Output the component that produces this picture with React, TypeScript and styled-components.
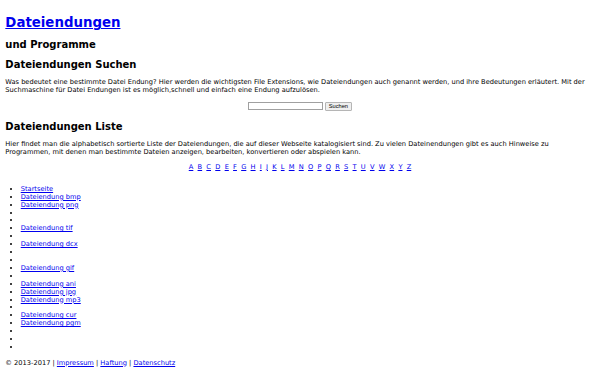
import React from "react";
import styled, { createGlobalStyle } from "styled-components";

const GlobalStyle = createGlobalStyle`
  html, body {
    margin: 0;
    padding: 0;
    background: #ffffff;
  }
  body {
    font-family: "DejaVu Sans", "Liberation Sans", sans-serif;
    font-size: 6.667px;
    color: #000000;
  }
`;

const Page = styled.div`
  display: flow-root;
  padding: 0 5.33px;
`;

const Link = styled.a`
  color: #0000ee;
  text-decoration: underline;
`;

const Title = styled.h1`
  font-size: 13.33px;
  font-weight: bold;
  margin: 15.3px 0 8.93px;
  line-height: normal;
`;

const SubHeading = styled.h2<{ $after?: number }>`
  font-size: 10px;
  font-weight: bold;
  margin: 8.3px 0 ${(p) => p.$after ?? 8.3}px;
  line-height: normal;
`;

const Text = styled.p`
  margin: 6.67px 0;
  line-height: normal;
`;

const SearchForm = styled.form`
  display: flex;
  justify-content: center;
  align-items: center;
  gap: 1.7px;
  height: 11.8px;
  margin: 6.67px 0;
`;

const SearchInput = styled.input`
  box-sizing: border-box;
  width: 75px;
  height: 8px;
  padding: 0 2px;
  border: 1px solid #a0a0a0;
  background: #ffffff;
  font-size: 5.7px;
`;

const SearchButton = styled.button`
  box-sizing: border-box;
  width: 27px;
  height: 8.3px;
  padding: 0;
  border: 1px solid #b5b5b5;
  border-radius: 1px;
  background: #efefef;
  font-family: "Liberation Sans", sans-serif;
  font-size: 5.7px;
  line-height: 1;
  color: #000000;
`;

const Alphabet = styled.p`
  margin: 6.2px 0 0;
  text-align: center;
  line-height: normal;
`;

const List = styled.ul`
  margin: 15px 0 0;
  padding-left: 15.4px;
  list-style: disc;
`;

const Item = styled.li`
  line-height: 7.92px;
  height: 7.92px;
`;

const Footer = styled.p`
  margin: 6.67px 0;
  line-height: normal;
`;

const letters = "ABCDEFGHIJKLMNOPQRSTUVWXYZ".split("");

const items: (string | null)[] = [
  "Startseite",
  "Dateiendung bmp",
  "Dateiendung png",
  null,
  null,
  "Dateiendung tif",
  null,
  "Dateiendung dcx",
  null,
  null,
  "Dateiendung gif",
  null,
  "Dateiendung ani",
  "Dateiendung jpg",
  "Dateiendung mp3",
  null,
  "Dateiendung cur",
  "Dateiendung pgm",
  null,
  null,
  null,
];

export default function App() {
  return (
    <>
      <GlobalStyle />
      <Page>
        <Title>
          <Link href="#">Dateiendungen</Link>
        </Title>
        <SubHeading>und Programme</SubHeading>
        <SubHeading>Dateiendungen Suchen</SubHeading>
        <Text>
          Was bedeutet eine bestimmte Datei Endung? Hier werden die wichtigsten File Extensions, wie
          Dateiendungen auch genannt werden, und ihre Bedeutungen erläutert. Mit der Suchmaschine für
          Datei Endungen ist es möglich,schnell und einfach eine Endung aufzulösen.
        </Text>
        <SearchForm onSubmit={(e) => e.preventDefault()}>
          <SearchInput type="text" />
          <SearchButton type="submit">Suchen</SearchButton>
        </SearchForm>
        <SubHeading $after={8.6}>Dateiendungen Liste</SubHeading>
        <Text>
          Hier findet man die alphabetisch sortierte Liste der Dateiendungen, die auf dieser Webseite
          katalogisiert sind. Zu vielen Dateinendungen gibt es auch Hinweise zu Programmen, mit denen man
          bestimmte Dateien anzeigen, bearbeiten, konvertieren oder abspielen kann.
        </Text>
        <Alphabet>
          {letters.map((l, i) => (
            <React.Fragment key={l}>
              <Link href="#">{l}</Link>
              {i < letters.length - 1 ? "\u00a0 " : ""}
            </React.Fragment>
          ))}
        </Alphabet>
        <List>
          {items.map((t, i) => (
            <Item key={i}>{t ? <Link href="#">{t}</Link> : null}</Item>
          ))}
        </List>
        <Footer>
          © 2013-2017 | <Link href="#">Impressum</Link> | <Link href="#">Haftung</Link> |{" "}
          <Link href="#">Datenschutz</Link>
        </Footer>
      </Page>
    </>
  );
}
